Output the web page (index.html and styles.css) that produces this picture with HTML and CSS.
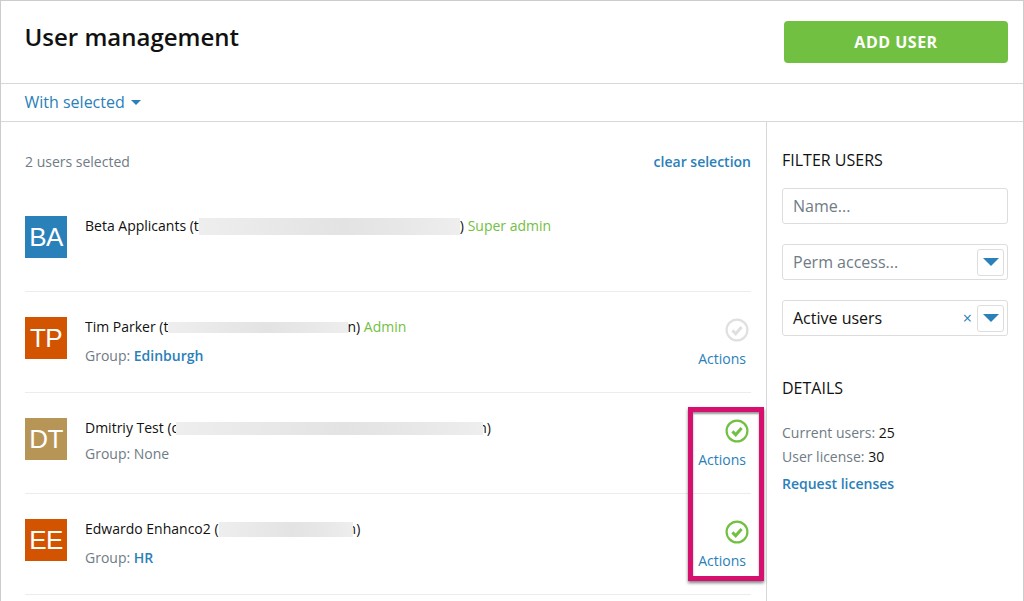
FILE: index.html
```html
<!DOCTYPE html>
<html lang="en">
<head>
<meta charset="utf-8">
<title>User management</title>
<link rel="stylesheet" href="styles.css">
</head>
<body>
<div class="app">
  <header class="head">
    <h1>User management</h1>
    <button class="add">ADD USER</button>
  </header>
  <div class="bar"><a class="with">With selected<span class="caret"></span></a></div>
  <div class="main">
    <section class="list">
      <div class="summary"><span>2 users selected</span><a class="clear">clear selection</a></div>
      <div class="row">
        <div class="av blue">BA</div>
        <div class="info">
          <div class="name">Beta Applicants (t<span class="blur b1"></span>) <span class="role">Super admin</span></div>
        </div>
      </div>
      <div class="row">
        <div class="av orange">TP</div>
        <div class="info">
          <div class="name">Tim Parker (t<span class="blur b2"></span>n) <span class="role">Admin</span></div>
          <div class="group">Group: <a>Edinburgh</a></div>
        </div>
        <div class="side">
          <svg class="check" viewBox="0 0 24 24"><circle cx="12" cy="12" r="10.4" fill="none" stroke="#e0e0e0" stroke-width="2.2"/><path d="M7.4 12.4l3.3 3.3 5.9-6.8" fill="none" stroke="#e0e0e0" stroke-width="3"/></svg>
          <a>Actions</a>
        </div>
      </div>
      <div class="row">
        <div class="av tan">DT</div>
        <div class="info">
          <div class="name">Dmitriy Test (d<span class="blur b3"></span>n)</div>
          <div class="group gnone">Group: None</div>
        </div>
        <div class="side">
          <svg class="check" viewBox="0 0 24 24"><circle cx="12" cy="12" r="10.4" fill="none" stroke="#72c042" stroke-width="2.2"/><path d="M7.4 12.4l3.3 3.3 5.9-6.8" fill="none" stroke="#72c042" stroke-width="3"/></svg>
          <a>Actions</a>
        </div>
      </div>
      <div class="row">
        <div class="av orange">EE</div>
        <div class="info">
          <div class="name">Edwardo Enhanco2 (<span class="blur b4"></span>n)</div>
          <div class="group">Group: <a>HR</a></div>
        </div>
        <div class="side">
          <svg class="check" viewBox="0 0 24 24"><circle cx="12" cy="12" r="10.4" fill="none" stroke="#72c042" stroke-width="2.2"/><path d="M7.4 12.4l3.3 3.3 5.9-6.8" fill="none" stroke="#72c042" stroke-width="3"/></svg>
          <a>Actions</a>
        </div>
      </div>
    </section>
    <aside class="filters">
      <h2>FILTER USERS</h2>
      <div class="field"><span class="ph">Name...</span></div>
      <div class="field"><span class="ph">Perm access...</span><span class="drop"><i></i></span></div>
      <div class="field"><span class="val">Active users</span><span class="x">×</span><span class="drop"><i></i></span></div>
      <h2 class="details">DETAILS</h2>
      <p class="stat">Current users: <b>25</b></p>
      <p class="stat">User license: <b>30</b></p>
      <a class="req">Request licenses</a>
    </aside>
  </div>
  <div class="mark"></div>
</div>
</body>
</html>
```
FILE: styles.css
```css
* { box-sizing: border-box; }
html, body { margin: 0; height: 601px; overflow: hidden; background: #fff; }
body { font-family: "Open Sans", sans-serif; font-size: 14px; color: #111; }
a { color: #2a80b9; text-decoration: none; }
.app { position: relative; height: 601px; border: 1px solid #ccc; border-bottom: 0; }
.head { height: 83px; border-bottom: 1px solid #d8d8d8; display: flex; justify-content: space-between; padding: 20px 15px 0 23.5px; }
h1 { margin: 0; font-size: 24px; font-weight: 600; line-height: 32px; color: #111; }
.add { width: 224px; height: 42px; border: 0; border-radius: 4px; background: #72c042; color: #fff; font: 700 16px "Open Sans", sans-serif; letter-spacing: .5px; }
.bar { height: 38px; border-bottom: 1px solid #d8d8d8; padding-left: 23.5px; line-height: 36px; font-size: 16px; }
.caret { display: inline-block; margin-left: 6px; vertical-align: 3px; border: 5px solid transparent; border-top-color: #2a80b9; border-bottom: 0; }
.main { display: flex; height: 479px; }
.list { width: 766px; border-right: 1px solid #d8d8d8; padding: 29px 15px 0 24px; }
.summary { display: flex; justify-content: space-between; line-height: 22px; height: 65px; color: #6f7b85; }
.clear { font-weight: 600; }
.row { display: flex; height: 101px; padding-top: 25px; border-bottom: 1px solid #ececec; }
.summary + .row { height: 76px; padding-top: 0; }
.av { width: 42px; height: 42px; flex: none; color: #fff; font: 26px/42px "Liberation Sans", sans-serif; text-align: center; letter-spacing: -.6px; }
.blue { background: #2a80b9; }
.orange { background: #d35400; }
.tan { background: #b79556; }
.info { flex: 1; padding-left: 18px; }
.name { line-height: 20px; white-space: nowrap; }
.blur { display: inline-block; position: relative; height: 15px; vertical-align: -3px; background: linear-gradient(90deg, #eee, #e3e3e3 55%, #e8e8e8 80%, #eee); }
.b1 { width: 261px; height: 17px; vertical-align: -4px; }
.b2 { width: 180px; height: 11px; vertical-align: -1px; margin-right: -1px; }
.b3 { width: 307px; height: 13px; vertical-align: -2px; margin-left: -4px; margin-right: -5px; }
.b4 { width: 134px; margin-right: -5px; }
.role { color: #72c042; }
.group { margin-top: 9px; line-height: 20px; color: #6f7b85; }
.group a { font-weight: 600; }
.gnone { margin-top: 6px; }
.side { width: 52px; display: flex; flex-direction: column; align-items: flex-end; }
.check { width: 24px; height: 24px; margin: 1px 2px 7px 0; flex: none; }
.side a { line-height: 20px; margin-right: 5px; }
.filters { flex: 1; padding: 27px 15px 0 15px; }
h2 { margin: 0 0 17px; font-size: 16px; font-weight: 400; line-height: 22px; color: #111; }
.field { height: 36px; border: 1px solid #ddd; border-radius: 3px; margin-bottom: 20px; display: flex; align-items: center; padding: 0 3px 0 10px; font-size: 16px; }
.ph { flex: 1; color: #6f7b85; }
.val { flex: 1; color: #111; }
.x { color: #2a80b9; font-size: 16px; margin-right: 5px; }
.drop { width: 27px; height: 27px; border: 1px solid #ddd; border-radius: 3px; display: flex; align-items: center; justify-content: center; }
.drop i { border: 8px solid transparent; border-top: 8px solid #2a80b9; border-bottom: 0; }
.details { margin: 41px 0 24px; }
.stat { margin: 0 0 4px; line-height: 20px; color: #6f7b85; }
.stat b { font-weight: 400; color: #111; }
.req { display: block; margin-top: 7px; line-height: 20px; font-weight: 600; }
.mark { position: absolute; left: 687px; top: 406px; width: 76px; height: 174px; border: 5px solid #d5106f; box-shadow: 0 2px 3px rgba(0,0,0,.5), inset 0 2px 2px rgba(0,0,0,.4); }
```
